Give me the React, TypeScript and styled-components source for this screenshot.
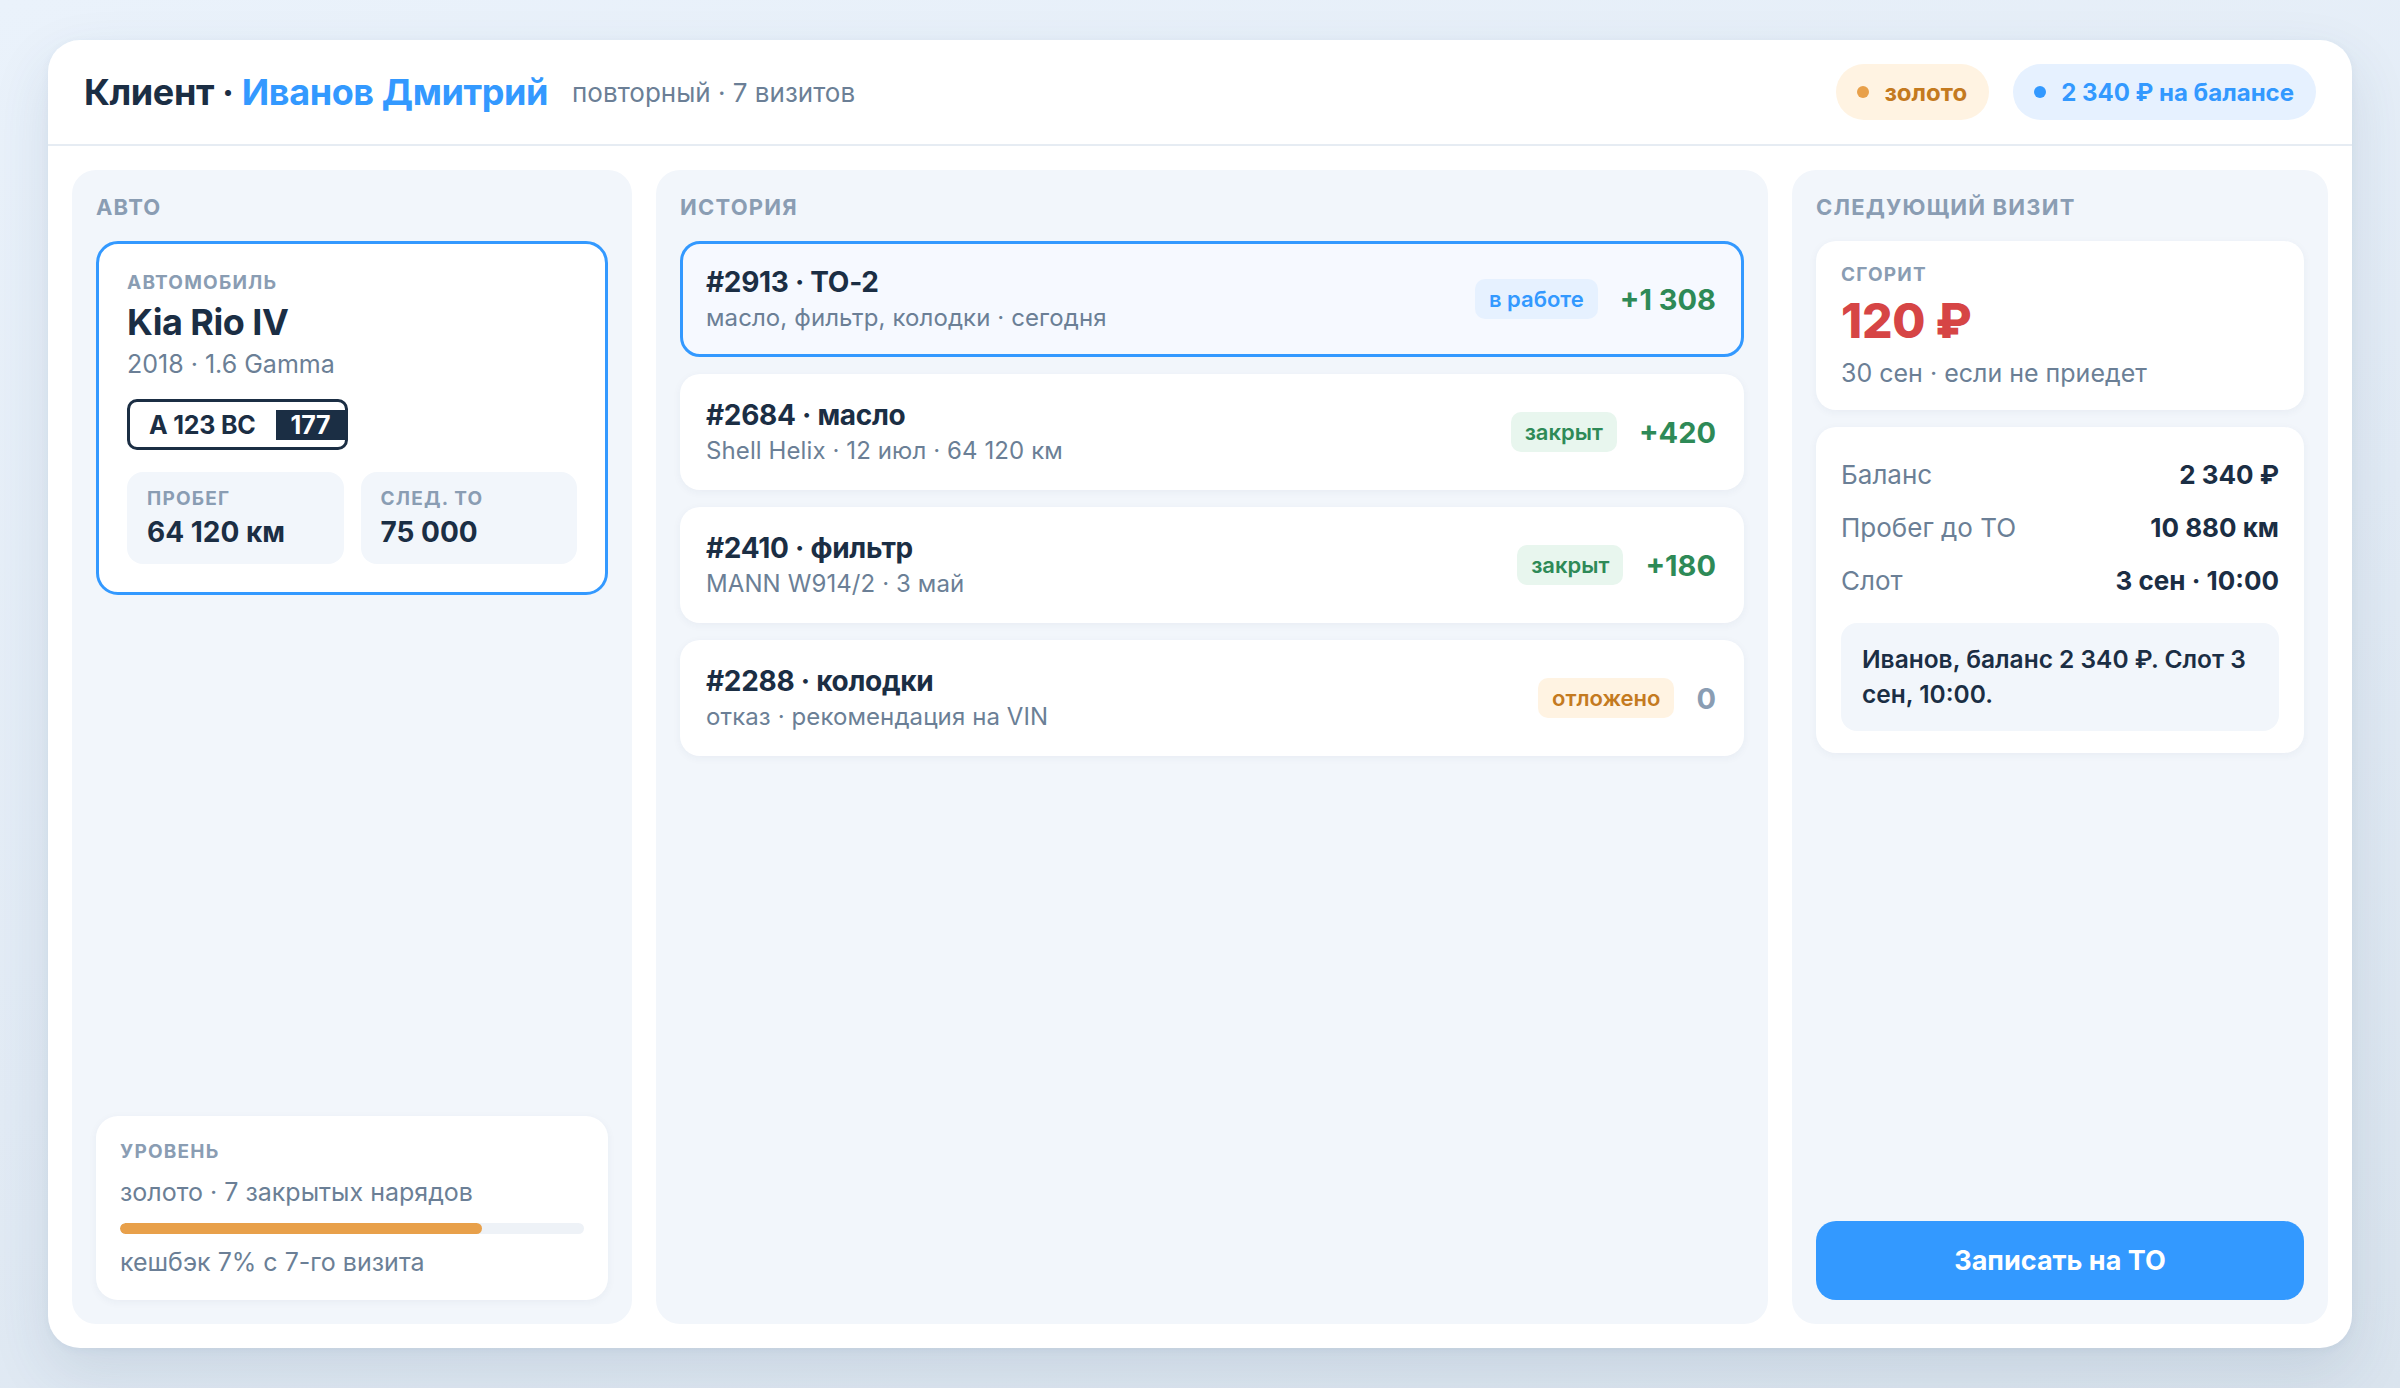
import React from "react";
import styled, { createGlobalStyle } from "styled-components";

const NAVY = "#1b2e44";
const BLUE = "#3399ff";
const LABEL = "#8a9db3";
const MUTED = "#6b7f96";
const GREEN = "#2e8a57";
const ORANGE = "#c47a1f";
const RED = "#d64545";
const PANEL = "#f2f6fb";

const GlobalStyle = createGlobalStyle`
  * { box-sizing: border-box; }
  html, body {
    margin: 0;
    padding: 0;
  }
  body {
    font-family: Inter, "Noto Sans", "DejaVu Sans", sans-serif;
    background: linear-gradient(165deg, #eaf2fb 0%, #e2ebf5 55%, #dae4ee 100%);
    color: ${NAVY};
  }
`;

const Page = styled.div`
  height: 1388px;
  padding: 40px 48px 40px;
`;

const Shell = styled.div`
  height: 100%;
  background: #fff;
  border-radius: 32px;
  box-shadow: 0 24px 60px rgba(40, 70, 110, 0.12), 0 2px 8px rgba(40, 70, 110, 0.05);
  display: flex;
  flex-direction: column;
  overflow: hidden;
`;

const Header = styled.header`
  height: 106px;
  flex: none;
  display: flex;
  align-items: center;
  padding: 0 36px;
  border-bottom: 2px solid #e6ecf3;
`;

const Title = styled.h1`
  margin: 0;
  font-size: 36px;
  font-weight: 700;
  letter-spacing: -0.4px;
  color: ${NAVY};
  span {
    color: ${BLUE};
  }
`;

const Subtitle = styled.div`
  margin-left: 24px;
  font-size: 26px;
  color: ${MUTED};
`;

const HeaderBadges = styled.div`
  margin-left: auto;
  display: flex;
  gap: 24px;
`;

const Pill = styled.div<{ $tone: "gold" | "blue" }>`
  height: 56px;
  padding: 0 22px 0 21px;
  border-radius: 28px;
  display: flex;
  align-items: center;
  gap: 15px;
  font-size: 24px;
  font-weight: 700;
  background: ${(p) => (p.$tone === "gold" ? "#fff3e2" : "#e6f1ff")};
  color: ${(p) => (p.$tone === "gold" ? ORANGE : BLUE)};
  &::before {
    content: "";
    width: 12px;
    height: 12px;
    border-radius: 50%;
    background: ${(p) => (p.$tone === "gold" ? "#e8a04a" : BLUE)};
  }
`;

const Body = styled.div`
  flex: 1;
  display: grid;
  grid-template-columns: 560px 1fr 536px;
  gap: 24px;
  padding: 24px;
  min-height: 0;
`;

const Panel = styled.section`
  background: ${PANEL};
  border-radius: 24px;
  padding: 24px;
  display: flex;
  flex-direction: column;
`;

const PanelTitle = styled.h2`
  margin: 0 0 21px;
  font-size: 22px;
  line-height: 26px;
  font-weight: 700;
  letter-spacing: 1.2px;
  text-transform: uppercase;
  color: ${LABEL};
`;

const Label = styled.div`
  font-size: 19px;
  line-height: 24px;
  font-weight: 700;
  letter-spacing: 1.2px;
  text-transform: uppercase;
  color: ${LABEL};
`;

const CarCard = styled.div`
  background: #fff;
  border: 3px solid ${BLUE};
  border-radius: 22px;
  padding: 27px 28px 28px;
`;

const CarName = styled.div`
  margin-top: 5px;
  font-size: 36px;
  line-height: 44px;
  font-weight: 700;
  letter-spacing: -0.5px;
`;

const CarSpec = styled.div`
  margin-top: 5px;
  font-size: 25px;
  line-height: 30px;
  color: ${MUTED};
`;

const Plate = styled.div`
  margin-top: 20px;
  display: inline-flex;
  align-items: center;
  height: 51px;
  border: 3px solid ${NAVY};
  border-radius: 10px;
  overflow: hidden;
  font-size: 25px;
  font-weight: 700;
  letter-spacing: -0.2px;
`;

const PlateNumber = styled.span`
  padding: 0 20px 0 19px;
`;

const PlateRegion = styled.span`
  height: 30px;
  display: flex;
  align-items: center;
  padding: 0 15px;
  background: ${NAVY};
  color: #fff;
`;

const Stats = styled.div`
  margin-top: 22px;
  display: grid;
  grid-template-columns: 1fr 1fr;
  gap: 17px;
`;

const StatBox = styled.div`
  background: ${PANEL};
  border-radius: 16px;
  padding: 15px 20px;
`;

const StatValue = styled.div`
  margin-top: 4px;
  font-size: 28px;
  line-height: 34px;
  font-weight: 700;
`;

const LevelCard = styled.div`
  margin-top: auto;
  background: #fff;
  border-radius: 22px;
  padding: 24px 24px 23px;
  box-shadow: 0 2px 8px rgba(30, 60, 100, 0.05);
`;

const LevelText = styled.div`
  margin-top: 13px;
  font-size: 25px;
  line-height: 30px;
  color: ${MUTED};
`;

const Track = styled.div`
  margin-top: 16px;
  height: 11px;
  border-radius: 6px;
  background: #eef2f7;
  overflow: hidden;
`;

const Fill = styled.div`
  height: 100%;
  border-radius: 6px;
  background: #e8a04a;
`;

const OrderList = styled.div`
  display: flex;
  flex-direction: column;
  gap: 17px;
`;

const Order = styled.div<{ $active?: boolean }>`
  height: 116px;
  display: flex;
  align-items: center;
  padding: 0 25px 0 23px;
  border-radius: 20px;
  border: 3px solid ${(p) => (p.$active ? BLUE : "transparent")};
  background: ${(p) => (p.$active ? "#f6f9ff" : "#fff")};
  box-shadow: ${(p) => (p.$active ? "none" : "0 2px 8px rgba(30, 60, 100, 0.05)")};
`;

const OrderInfo = styled.div`
  flex: 1;
  min-width: 0;
`;

const OrderTitle = styled.div`
  font-size: 28px;
  line-height: 34px;
  font-weight: 700;
  letter-spacing: -0.3px;
`;

const OrderMeta = styled.div`
  margin-top: 4px;
  font-size: 24px;
  line-height: 30px;
  letter-spacing: 0.1px;
  color: ${MUTED};
`;

type Status = "work" | "closed" | "postponed";

const statusColors: Record<Status, [string, string]> = {
  work: ["#e6f1ff", BLUE],
  closed: ["#e8f6ee", GREEN],
  postponed: ["#fff3e2", ORANGE],
};

const StatusTag = styled.span<{ $status: Status }>`
  height: 40px;
  display: flex;
  align-items: center;
  padding: 0 14px;
  border-radius: 10px;
  font-size: 22px;
  font-weight: 600;
  background: ${(p) => statusColors[p.$status][0]};
  color: ${(p) => statusColors[p.$status][1]};
`;

const Amount = styled.span<{ $zero?: boolean }>`
  margin-left: 22px;
  font-size: 29px;
  font-weight: 700;
  color: ${(p) => (p.$zero ? LABEL : GREEN)};
`;

const WhiteCard = styled.div`
  background: #fff;
  border-radius: 20px;
  box-shadow: 0 2px 8px rgba(30, 60, 100, 0.05);
`;

const BurnCard = styled(WhiteCard)`
  padding: 22px 25px;
`;

const BurnValue = styled.div`
  margin-top: 6px;
  font-size: 48px;
  line-height: 56px;
  font-weight: 800;
  color: ${RED};
  letter-spacing: -0.3px;
`;

const BurnNote = styled.div`
  margin-top: 9px;
  font-size: 25px;
  line-height: 30px;
  color: ${MUTED};
`;

const InfoCard = styled(WhiteCard)`
  margin-top: 17px;
  padding: 30px 25px 22px;
`;

const InfoRows = styled.div`
  display: flex;
  flex-direction: column;
  gap: 17px;
`;

const InfoRow = styled.div`
  display: flex;
  justify-content: space-between;
  align-items: center;
  font-size: 26px;
  line-height: 36px;
  color: ${MUTED};
  b {
    font-size: 26px;
    font-weight: 700;
    color: ${NAVY};
  }
`;

const Message = styled.div`
  margin-top: 24px;
  background: ${PANEL};
  border-radius: 16px;
  padding: 19px 21px;
  font-size: 24.5px;
  line-height: 35px;
  font-weight: 600;
  color: ${NAVY};
`;

const BookButton = styled.button`
  margin-top: auto;
  height: 79px;
  border: none;
  border-radius: 20px;
  background: ${BLUE};
  color: #fff;
  font-family: inherit;
  font-size: 27px;
  font-weight: 700;
  cursor: pointer;
`;

const orders: { id: string; name: string; meta: string; status: Status; label: string; amount: string; active?: boolean }[] = [
  { id: "#2913", name: "ТО-2", meta: "масло, фильтр, колодки · сегодня", status: "work", label: "в работе", amount: "+1 308", active: true },
  { id: "#2684", name: "масло", meta: "Shell Helix · 12 июл · 64 120 км", status: "closed", label: "закрыт", amount: "+420" },
  { id: "#2410", name: "фильтр", meta: "MANN W914/2 · 3 май", status: "closed", label: "закрыт", amount: "+180" },
  { id: "#2288", name: "колодки", meta: "отказ · рекомендация на VIN", status: "postponed", label: "отложено", amount: "0" },
];

export default function App() {
  const level = 78;
  return (
    <>
      <GlobalStyle />
      <Page>
        <Shell>
          <Header>
            <Title>
              Клиент · <span>Иванов Дмитрий</span>
            </Title>
            <Subtitle>повторный · 7 визитов</Subtitle>
            <HeaderBadges>
              <Pill $tone="gold">золото</Pill>
              <Pill $tone="blue">2 340 ₽ на балансе</Pill>
            </HeaderBadges>
          </Header>

          <Body>
            <Panel>
              <PanelTitle>Авто</PanelTitle>
              <CarCard>
                <Label>Автомобиль</Label>
                <CarName>Kia Rio IV</CarName>
                <CarSpec>2018 · 1.6 Gamma</CarSpec>
                <Plate>
                  <PlateNumber>А 123 ВС</PlateNumber>
                  <PlateRegion>177</PlateRegion>
                </Plate>
                <Stats>
                  <StatBox>
                    <Label>Пробег</Label>
                    <StatValue>64 120 км</StatValue>
                  </StatBox>
                  <StatBox>
                    <Label>След. ТО</Label>
                    <StatValue>75 000</StatValue>
                  </StatBox>
                </Stats>
              </CarCard>

              <LevelCard>
                <Label>Уровень</Label>
                <LevelText>золото · 7 закрытых нарядов</LevelText>
                <Track>
                  <Fill style={{ width: `${level}%` }} />
                </Track>
                <LevelText>кешбэк 7% с 7-го визита</LevelText>
              </LevelCard>
            </Panel>

            <Panel>
              <PanelTitle>История</PanelTitle>
              <OrderList>
                {orders.map((o) => (
                  <Order key={o.id} $active={o.active}>
                    <OrderInfo>
                      <OrderTitle>
                        {o.id} · {o.name}
                      </OrderTitle>
                      <OrderMeta>{o.meta}</OrderMeta>
                    </OrderInfo>
                    <StatusTag $status={o.status}>{o.label}</StatusTag>
                    <Amount $zero={o.amount === "0"}>{o.amount}</Amount>
                  </Order>
                ))}
              </OrderList>
            </Panel>

            <Panel>
              <PanelTitle>Следующий визит</PanelTitle>
              <BurnCard>
                <Label>Сгорит</Label>
                <BurnValue>120 ₽</BurnValue>
                <BurnNote>30 сен · если не приедет</BurnNote>
              </BurnCard>
              <InfoCard>
                <InfoRows>
                  <InfoRow>
                    Баланс <b>2 340 ₽</b>
                  </InfoRow>
                  <InfoRow>
                    Пробег до ТО <b>10 880 км</b>
                  </InfoRow>
                  <InfoRow>
                    Слот <b>3 сен · 10:00</b>
                  </InfoRow>
                </InfoRows>
                <Message>Иванов, баланс 2 340 ₽. Слот 3 сен, 10:00.</Message>
              </InfoCard>
              <BookButton>Записать на ТО</BookButton>
            </Panel>
          </Body>
        </Shell>
      </Page>
    </>
  );
}
